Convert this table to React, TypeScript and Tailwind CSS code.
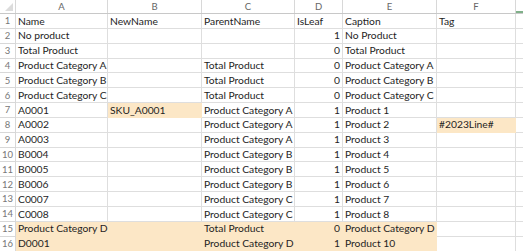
const cols = ["A", "B", "C", "D", "E", "F"];
const widths = ["w-[92px]", "w-[94px]", "w-[93px]", "w-[48px]", "w-[94px]", "w-[79px]"];

type Row = [string, string, string, string, string, string];

const rows: Row[] = [
  ["Name", "NewName", "ParentName", "IsLeaf", "Caption", "Tag"],
  ["No product", "", "", "1", "No Product", ""],
  ["Total Product", "", "", "0", "Total Product", ""],
  ["Product Category A", "", "Total Product", "0", "Product Category A", ""],
  ["Product Category B", "", "Total Product", "0", "Product Category B", ""],
  ["Product Category C", "", "Total Product", "0", "Product Category C", ""],
  ["A0001", "SKU_A0001", "Product Category A", "1", "Product 1", ""],
  ["A0002", "", "Product Category A", "1", "Product 2", "#2023Line#"],
  ["A0003", "", "Product Category A", "1", "Product 3", ""],
  ["B0004", "", "Product Category B", "1", "Product 4", ""],
  ["B0005", "", "Product Category B", "1", "Product 5", ""],
  ["B0006", "", "Product Category B", "1", "Product 6", ""],
  ["C0007", "", "Product Category C", "1", "Product 7", ""],
  ["C0008", "", "Product Category C", "1", "Product 8", ""],
  ["Product Category D", "", "Total Product", "0", "Product Category D", ""],
  ["D0001", "", "Product Category D", "1", "Product 10", ""],
];

// peach filled cells
const filled = (r: number, c: number) =>
  (r === 6 && c === 1) || (r === 7 && c === 5) || ((r === 14 || r === 15) && c <= 4);

export default function App() {
  return (
    <div className="w-[523px] h-[251px] overflow-hidden bg-white text-[10.3px] text-[#1e1e1e] font-['Lato',sans-serif] leading-none">
      {/* column headers */}
      <div className="flex h-[14px] bg-white border-b border-[#c8c8c8] text-[#666]">
        <div className="w-[16px] shrink-0 border-r border-[#d8d8d8] relative">
          <div className="absolute right-[2px] bottom-[2px] w-0 h-0 border-l-[8px] border-l-transparent border-b-[8px] border-b-[#dcdcdc]" />
        </div>
        {cols.map((c, i) => (
          <div key={c} className={`${widths[i]} shrink-0 border-r border-[#d8d8d8] flex items-center justify-center text-[9.5px]`}>
            {c}
          </div>
        ))}
        <div className="flex-1 border-b-2 border-[#7fb089]" />
      </div>
      {rows.map((row, r) => (
        <div key={r} className="flex h-[14.85px]">
          <div className="w-[16px] shrink-0 border-r border-b border-[#d8d8d8] bg-white text-[#777] text-[9.5px] flex items-end justify-center pb-[2px]">
            {r + 1}
          </div>
          {row.map((v, c) => (
            <div
              key={c}
              className={`${widths[c]} shrink-0 border-r border-b whitespace-nowrap flex items-end pb-[2px] px-[2px] ${
                filled(r, c) ? "bg-[#fce7c6] border-[#fce7c6]" : "border-[#dedede]"
              } ${c === 3 && r > 0 ? "justify-end" : ""}`}
            >
              {v}
            </div>
          ))}
          <div className="flex-1 border-b border-[#dedede]" />
        </div>
      ))}
    </div>
  );
}
